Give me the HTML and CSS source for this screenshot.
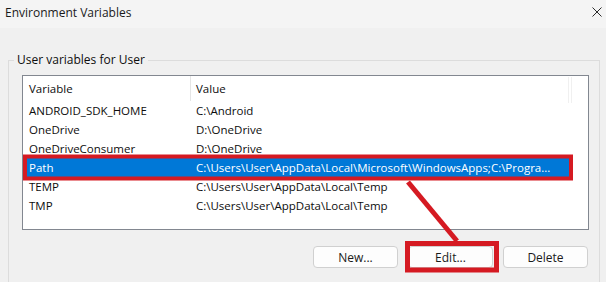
FILE: index.html
```html
<!DOCTYPE html>
<html lang="en">
<head>
<meta charset="utf-8">
<title>Environment Variables</title>
<link rel="stylesheet" href="styles.css">
</head>
<body>
<div class="dialog">
  <header class="titlebar">
    <span class="title">Environment Variables</span>
    <svg class="close" width="10" height="10" viewBox="0 0 10 10"><path d="M0.5 0.5 L9.5 9.5 M9.5 0.5 L0.5 9.5" stroke="#2b2b2b" stroke-width="1" fill="none"/></svg>
  </header>
  <section class="group">
    <div class="legend">User variables for User</div>
    <div class="list">
      <div class="row head"><div class="c1">Variable</div><div class="c2">Value</div></div>
      <div class="row"><div class="c1">ANDROID_SDK_HOME</div><div class="c2">C:\Android</div></div>
      <div class="row"><div class="c1">OneDrive</div><div class="c2">D:\OneDrive</div></div>
      <div class="row"><div class="c1">OneDriveConsumer</div><div class="c2">D:\OneDrive</div></div>
      <div class="row sel"><div class="c1">Path</div><div class="c2">C:\Users\User\AppData\Local\Microsoft\WindowsApps;C:\Progra...</div></div>
      <div class="row"><div class="c1">TEMP</div><div class="c2">C:\Users\User\AppData\Local\Temp</div></div>
      <div class="row"><div class="c1">TMP</div><div class="c2">C:\Users\User\AppData\Local\Temp</div></div>
      <div class="thumb"></div>
    </div>
    <div class="buttons">
      <button class="btn">New...</button>
      <button class="btn">Edit...</button>
      <button class="btn">Delete</button>
    </div>
  </section>
</div>
<svg class="annot" width="606" height="282" viewBox="0 0 606 282">
  <rect x="25" y="156.5" width="546" height="22" fill="none" stroke="#d51a22" stroke-width="4"/>
  <line x1="408" y1="182" x2="457" y2="241" stroke="#d51a22" stroke-width="5"/>
  <rect x="407.5" y="243.5" width="89" height="26.5" fill="none" stroke="#d51a22" stroke-width="5"/>
</svg>
</body>
</html>
```
FILE: styles.css
```css
* { box-sizing: border-box; }
html, body { margin: 0; padding: 0; }
body {
  width: 606px;
  height: 282px;
  overflow: hidden;
  background: #f0f0f0;
  font-family: "Open Sans", "Noto Sans", sans-serif;
  font-size: 11.5px;
  color: #0d0d0d;
  position: relative;
}
.titlebar {
  height: 28px;
  background: #f4f4f4;
  display: flex;
  align-items: center;
  justify-content: space-between;
  padding: 0 4px 4px 5px;
}
.title { font-size: 12px; color: #1a1a1a; }
.group {
  margin: 32px 6px 0 8px;
  border: 1px solid #dcdcdc;
  border-bottom: none;
  padding: 0 10px 0 13px;
  height: 222px;
}
.legend {
  display: table;
  margin: -9px 0 0 -8px;
  padding: 0 3px;
  height: 16px;
  line-height: 16px;
  background: #f0f0f0;
  font-size: 12px;
}
.list {
  position: relative;
  margin-top: 7px;
  height: 155px;
  background: #fff;
  border: 1px solid #828790;
}
.row {
  display: flex;
  height: 19px;
  line-height: 19px;
  margin-right: 17px;
  white-space: nowrap;
}
.row.head { height: 25px; line-height: 25px; }
.c1 { width: 168px; padding-left: 6px; }
.c2 { padding-left: 5px; }
.head .c1 { border-right: 1px solid #e5e5e5; }
.row.sel { background: #0078d7; color: #fff; }
.thumb {
  position: absolute;
  left: 545px;
  top: 1px;
  width: 4px;
  height: 26px;
  border-left: 1px solid #f0f0f0;
  border-right: 1px solid #f0f0f0;
}
.buttons {
  display: flex;
  justify-content: flex-end;
  gap: 10px;
  margin-top: 16px;
  padding-right: 1px;
}
.btn {
  width: 85px;
  height: 22px;
  background: #fdfdfd;
  border: 1px solid #d0d0d0;
  border-radius: 4px;
  font-family: inherit;
  font-size: 12px;
  color: #1a1a1a;
  padding: 0;
}
.annot { position: absolute; left: 0; top: 0; pointer-events: none; }
```
